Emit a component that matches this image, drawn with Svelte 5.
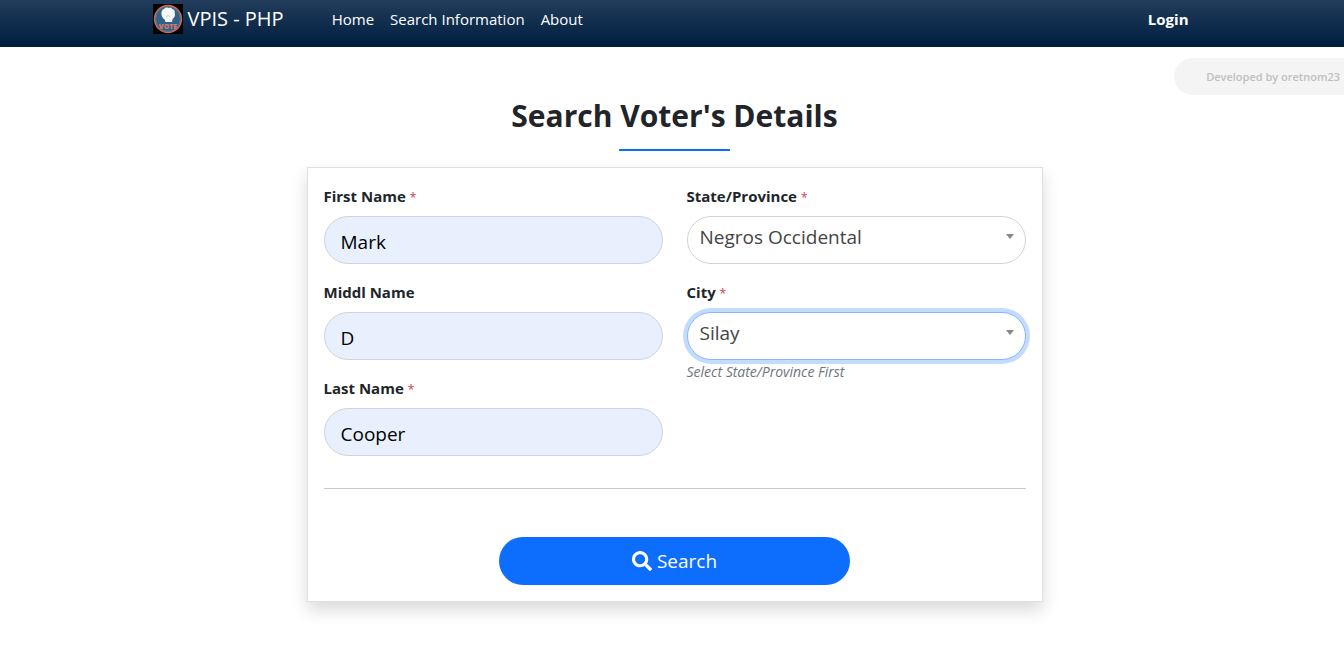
<script lang="ts">
	const links = ['Home', 'Search Information', 'About'];

	const provinces = ['Negros Occidental', 'Negros Oriental', 'Cebu'];
	const cities: Record<string, string[]> = {
		'Negros Occidental': ['Silay', 'Bacolod', 'Talisay'],
		'Negros Oriental': ['Dumaguete', 'Bais'],
		Cebu: ['Cebu City', 'Mandaue'],
	};

	let firstName = $state('Mark');
	let middleName = $state('D');
	let lastName = $state('Cooper');
	let province = $state('Negros Occidental');
	let city = $state('Silay');
	let active = $state('city');

	function search(event: SubmitEvent) {
		event.preventDefault();
	}
</script>

{#snippet caret()}
	<svg class="caret" viewBox="0 0 8 5" aria-hidden="true">
		<path d="M0 0H8L4 5Z" fill="#888" />
	</svg>
{/snippet}

<nav>
	<div class="container bar">
		<a class="brand" href="#home">
			<svg class="logo" viewBox="0 0 30 30" aria-hidden="true">
				<rect width="30" height="30" fill="#030000" />
				<circle cx="15" cy="15" r="13.4" fill="#2f6288" stroke="#c9655a" stroke-width="1.6" />
				<circle cx="15" cy="15" r="12.2" fill="none" stroke="#5c7f9b" stroke-width="0.6" />
				<path
					d="M8.5 10.5C8 7.500 9.200 5.600 11.200 4.800C12.600 3.400 14.300 3.400 15.200 4C17 3.200 18.600 3.900 19.200 4.900C21.300 5.200 22.200 7 21.700 9C22.500 11.200 21.700 13.600 19.600 15L19 18H12.500L11.600 15.600C10 14.200 8.700 12.800 8.500 10.500Z"
					fill="#f4f6f7"
				/>
				<path
					d="M13 12.500L15.500 11.500L17 13"
					fill="none"
					stroke="#a9bdcb"
					stroke-width="0.8"
				/>
				<text x="15" y="24.500" text-anchor="middle" class="logo-text">VOTE</text>
			</svg>
			VPIS - PHP
		</a>
		<div class="links">
			{#each links as link}
				<a href="#{link.toLowerCase().replace(' ', '-')}">{link}</a>
			{/each}
		</div>
		<a class="login" href="#login">Login</a>
	</div>
</nav>

<div class="developer">Developed by oretnom23</div>

<main class="container">
	<h1>Search Voter's Details</h1>
	<hr class="accent" />

	<form class="card" onsubmit={search}>
		<div class="fields">
			<div class="column">
				<div class="field">
					<label for="firstname">First Name <small>*</small></label>
					<input id="firstname" type="text" required bind:value={firstName} />
				</div>
				<div class="field">
					<label for="middlename">Middl Name</label>
					<input id="middlename" type="text" bind:value={middleName} />
				</div>
				<div class="field">
					<label for="lastname">Last Name <small>*</small></label>
					<input id="lastname" type="text" required bind:value={lastName} />
				</div>
			</div>
			<div class="column">
				<div class="field">
					<label for="province">State/Province <small>*</small></label>
					<div class="select">
						<select
							id="province"
							class:active={active === 'province'}
							bind:value={province}
							onfocus={() => (active = 'province')}
							onchange={() => (city = cities[province][0])}
						>
							{#each provinces as name}
								<option>{name}</option>
							{/each}
						</select>
						{@render caret()}
					</div>
				</div>
				<div class="field">
					<label for="city">City <small>*</small></label>
					<div class="select">
						<select
							id="city"
							class:active={active === 'city'}
							bind:value={city}
							onfocus={() => (active = 'city')}
						>
							{#each cities[province] as name}
								<option>{name}</option>
							{/each}
						</select>
						{@render caret()}
					</div>
					<em>Select State/Province First</em>
				</div>
			</div>
		</div>

		<hr class="divider" />

		<button type="submit">
			<svg viewBox="0 0 512 512" aria-hidden="true">
				<path
					fill="currentColor"
					d="M505 442.700L405.300 343c-4.500-4.500-10.600-7-17-7H372c27.600-35.300 44-79.700 44-128C416 93.100 322.900 0 208 0S0 93.100 0 208s93.100 208 208 208c48.300 0 92.700-16.400 128-44v16.300c0 6.400 2.500 12.500 7 17l99.700 99.700c9.400 9.400 24.600 9.400 33.900 0l28.300-28.300c9.400-9.400 9.400-24.600.1-34zM208 336c-70.700 0-128-57.200-128-128 0-70.700 57.200-128 128-128 70.700 0 128 57.200 128 128 0 70.700-57.200 128-128 128z"
				/>
			</svg>
			Search
		</button>
	</form>
</main>

<style>
	:global(body) {
		background: #fff;
		color: #212529;
		font-family: 'Segoe UI', 'Open Sans', sans-serif;
		font-size: 15px;
		line-height: 24px;
	}

	nav,
	main,
	input,
	select,
	button {
		box-sizing: border-box;
	}

	nav {
		padding-left: 5px;
		background: linear-gradient(#233c5b, #001f3f 95%);
	}

	nav a {
		color: #fff;
		text-decoration: none;
	}

	.container {
		box-sizing: border-box;
		max-width: 1140px;
		margin: 0 auto;
	}

	.bar {
		display: flex;
		align-items: center;
		height: 47px;
		padding: 0 48px 9px;
	}

	.brand {
		display: flex;
		align-items: center;
		gap: 5px;
		margin-right: 40px;
		font-size: 20px;
		white-space: nowrap;
	}

	.logo {
		width: 30px;
		height: 30px;
	}

	.logo-text {
		font-size: 7px;
		font-weight: 800;
		fill: #d9776b;
	}

	.links {
		display: flex;
		flex: 1;
	}

	.links a,
	.login {
		padding: 0 8px;
	}

	.login {
		font-weight: 700;
	}

	.developer {
		position: absolute;
		top: 58px;
		right: 0;
		padding: 7px 4px 6px 32px;
		border-radius: 19px 0 0 19px;
		background: #f4f4f4;
		color: #c0c0c0;
		font-size: 11px;
		font-weight: 600;
	}

	main {
		padding: 49px 12px 32px 17px;
	}

	h1 {
		margin: 0;
		font-size: 30px;
		font-weight: 700;
		line-height: 40px;
		text-align: center;
	}

	hr {
		margin: 0;
		border: 0;
	}

	.accent {
		width: 111px;
		height: 2px;
		margin: 13px auto 16px;
		background: #0d6efd;
	}

	.card {
		box-sizing: border-box;
		max-width: 736px;
		margin: 0 auto;
		padding: 16px;
		border: 1px solid #dfdfdf;
		background: #fff;
		box-shadow: 0 8px 16px rgba(0, 0, 0, 0.15);
	}

	.fields {
		display: grid;
		grid-template-columns: 1fr 1fr;
		gap: 24px;
	}

	.column {
		display: flex;
		flex-direction: column;
		gap: 16px;
	}

	.field {
		display: flex;
		flex-direction: column;
	}

	label {
		margin-bottom: 8px;
		font-weight: 700;
	}

	label small {
		color: #dc3545;
		font-size: 12px;
		font-weight: 400;
		line-height: 1;
	}

	input,
	select {
		width: 100%;
		height: 48px;
		margin: 0;
		border: 1px solid #ced4da;
		border-radius: 24px;
		outline: none;
		font-family: inherit;
		font-size: 19px;
	}

	input {
		padding: 4px 16px 0;
		background: #e8f0fe;
		color: #000;
	}

	.select {
		display: grid;
		align-items: center;
	}

	.select > :global(*) {
		grid-area: 1 / 1;
	}

	select {
		appearance: none;
		padding: 0 32px 6px 12px;
		background: #fff;
		color: #444;
	}

	select.active {
		border-color: #86b7fe;
		box-shadow: 0 0 0 4px #c2dbff;
	}

	.caret {
		justify-self: end;
		width: 8px;
		height: 5px;
		margin: 0 12px 8px 0;
		pointer-events: none;
	}

	em {
		color: #6c757d;
		font-size: 14px;
	}

	.divider {
		height: 1px;
		margin: 32px 0 48px;
		background: #c8c9ca;
	}

	button {
		display: flex;
		align-items: center;
		justify-content: center;
		gap: 5px;
		width: 50%;
		height: 48px;
		margin: 0 auto;
		border: 0;
		border-radius: 24px;
		background: #0d6efd;
		color: #fff;
		font-family: inherit;
		font-size: 19px;
		cursor: pointer;
	}

	button svg {
		width: 20px;
		height: 20px;
	}
</style>
